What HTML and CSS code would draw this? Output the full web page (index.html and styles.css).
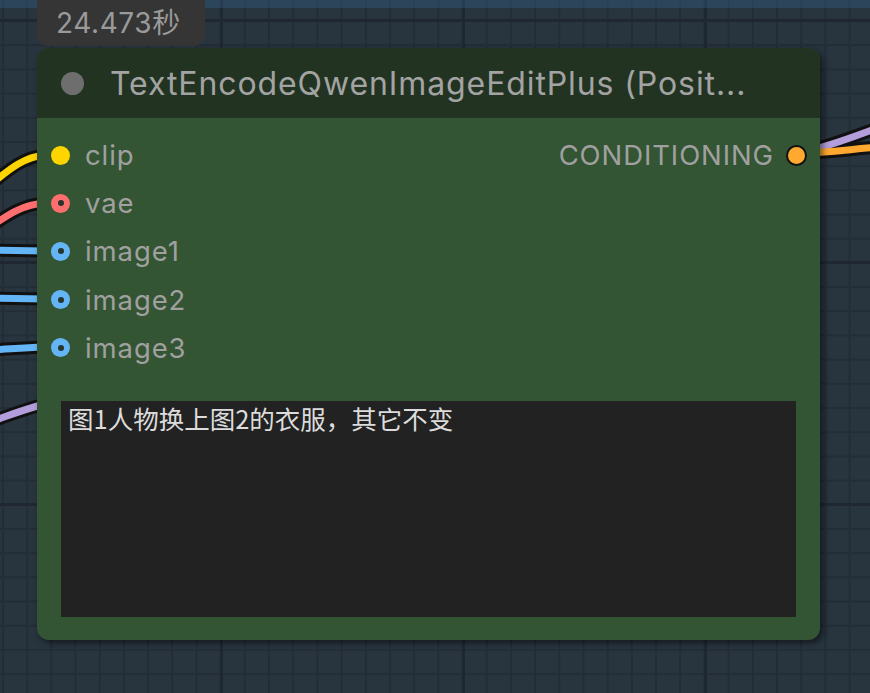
FILE: index.html
```html
<!DOCTYPE html>
<html lang="zh">
<head>
<meta charset="utf-8">
<link rel="stylesheet" href="styles.css">
</head>
<body>
<div class="canvas">
  <div class="topstrip"></div>
  <svg class="wires" width="870" height="693" viewBox="0 0 870 693">
    <g fill="none" stroke="#111" stroke-width="13" stroke-linecap="round">
      <path d="M -30 200 C 0 180, 15 158, 45 155"/>
      <path d="M -30 240 C 0 222, 15 205, 45 203"/>
      <path d="M -10 250 L 45 251"/>
      <path d="M -10 298 L 45 299"/>
      <path d="M -10 350 C 10 349, 20 348, 45 347"/>
      <path d="M -10 422 C 10 415, 25 409, 45 404"/>
      <path d="M 810 150 C 830 146, 850 138, 880 127"/>
      <path d="M 797 153 C 830 153, 850 149, 880 147"/>
    </g>
    <g fill="none" stroke-width="7" stroke-linecap="round">
      <path stroke="#ffd500" d="M -30 200 C 0 180, 15 158, 45 155"/>
      <path stroke="#ff6e6e" d="M -30 240 C 0 222, 15 205, 45 203"/>
      <path stroke="#64b5f6" d="M -10 250 L 45 251"/>
      <path stroke="#64b5f6" d="M -10 298 L 45 299"/>
      <path stroke="#64b5f6" d="M -10 350 C 10 349, 20 348, 45 347"/>
      <path stroke="#b39ddb" d="M -10 422 C 10 415, 25 409, 45 404"/>
      <path stroke="#b39ddb" d="M 810 150 C 830 146, 850 138, 880 127"/>
      <path stroke="#ffa931" d="M 797 153 C 830 153, 850 149, 880 147"/>
    </g>
  </svg>
  <div class="badge">24.473秒</div>
  <div class="node">
    <div class="title">
      <span class="title-dot"></span>
      <span class="title-text">TextEncodeQwenImageEditPlus (Posit...</span>
    </div>
    <div class="body">
      <div class="slots">
        <div class="inputs">
          <div class="slot"><span class="dot dot-clip"></span><span class="label">clip</span></div>
          <div class="slot"><span class="dot ring ring-vae"></span><span class="label">vae</span></div>
          <div class="slot"><span class="dot ring ring-image"></span><span class="label">image1</span></div>
          <div class="slot"><span class="dot ring ring-image"></span><span class="label">image2</span></div>
          <div class="slot"><span class="dot ring ring-image"></span><span class="label">image3</span></div>
        </div>
        <div class="outputs">
          <div class="slot"><span class="label">CONDITIONING</span><span class="dot dot-out"></span></div>
        </div>
      </div>
      <div class="textarea">图1人物换上图2的衣服，其它不变</div>
    </div>
  </div>
</div>
</body>
</html>
```
FILE: styles.css
```css
html, body {
  margin: 0;
  padding: 0;
}
body {
  width: 870px;
  height: 693px;
  overflow: hidden;
  font-family: Inter, "Noto Sans", sans-serif;
}
.canvas {
  position: relative;
  width: 870px;
  height: 693px;
  overflow: hidden;
  background-color: #28343e;
  background-image:
    linear-gradient(90deg, #1f2830 3px, transparent 3px),
    linear-gradient(0deg, #1f2830 3px, transparent 3px),
    linear-gradient(90deg, #222d36 2px, transparent 2px),
    linear-gradient(0deg, #222d36 2px, transparent 2px);
  background-size: 242px 100%, 100% 242px, 24.2px 100%, 100% 24.2px;
  background-position: 220px 0, 0 22px, 2px 0, 0 22px;
}
.topstrip {
  position: absolute;
  left: 0;
  top: 0;
  width: 870px;
  height: 8px;
  background: rgba(60, 110, 160, 0.3);
}
.wires {
  position: absolute;
  left: 0;
  top: 0;
}
.badge {
  position: absolute;
  left: 37px;
  top: -12px;
  width: 168px;
  height: 58px;
  box-sizing: border-box;
  padding-top: 12px;
  background: #353535;
  border-radius: 10px;
  color: #9a9a9a;
  font-size: 28px;
  letter-spacing: 0.6px;
  line-height: 46px;
  padding-left: 19px;
  font-family: Inter, "Noto Sans CJK SC", sans-serif;
}
.node {
  position: absolute;
  left: 37px;
  top: 48px;
  width: 783px;
  height: 592px;
  border-radius: 12px;
  background: #335533;
  box-shadow: 3px 3px 6px rgba(0, 0, 0, 0.5);
  overflow: hidden;
  display: flex;
  flex-direction: column;
}
.title {
  height: 70px;
  background: #223322;
  display: flex;
  align-items: center;
  padding-left: 24px;
  gap: 26px;
  flex-shrink: 0;
}
.title-dot {
  width: 23px;
  height: 23px;
  border-radius: 50%;
  background: #6e6e6e;
  flex-shrink: 0;
}
.title-text {
  color: #a3a3a3;
  font-size: 32px;
  letter-spacing: 0.9px;
  white-space: nowrap;
  margin-top: 1px;
}
.body {
  flex: 1;
  display: flex;
  flex-direction: column;
  padding: 13px 24px 24px 14px;
}
.slots {
  display: flex;
  justify-content: space-between;
}
.inputs, .outputs {
  display: flex;
  flex-direction: column;
}
.outputs {
  margin-right: -11px;
}
.slot {
  height: 48.2px;
  display: flex;
  align-items: center;
  gap: 15px;
}
.outputs .slot {
  gap: 12px;
}
.label {
  color: #a0a0a0;
  font-size: 27.5px;
  letter-spacing: 0.9px;
  white-space: nowrap;
}
.dot {
  width: 19px;
  height: 19px;
  border-radius: 50%;
  box-sizing: border-box;
  flex-shrink: 0;
  position: relative;
}
.dot-clip {
  background: #ffd500;
}
.ring::after {
  content: "";
  position: absolute;
  left: 6.5px;
  top: 6.5px;
  width: 6px;
  height: 6px;
  border-radius: 50%;
  background: #28352a;
}
.ring-vae {
  background: #ff6e6e;
}
.ring-image {
  background: #64b5f6;
}
.dot-out {
  width: 21px;
  height: 21px;
  background: #ffa931;
  border: 2.5px solid #111;
}
.textarea {
  margin-top: 29px;
  margin-left: 10px;
  height: 216px;
  background: #222222;
  color: #dcdcdc;
  font-family: "Noto Sans CJK SC", sans-serif;
  font-size: 25.5px;
  line-height: 1.2;
  padding: 2px 7px;
  box-sizing: border-box;
}
```
